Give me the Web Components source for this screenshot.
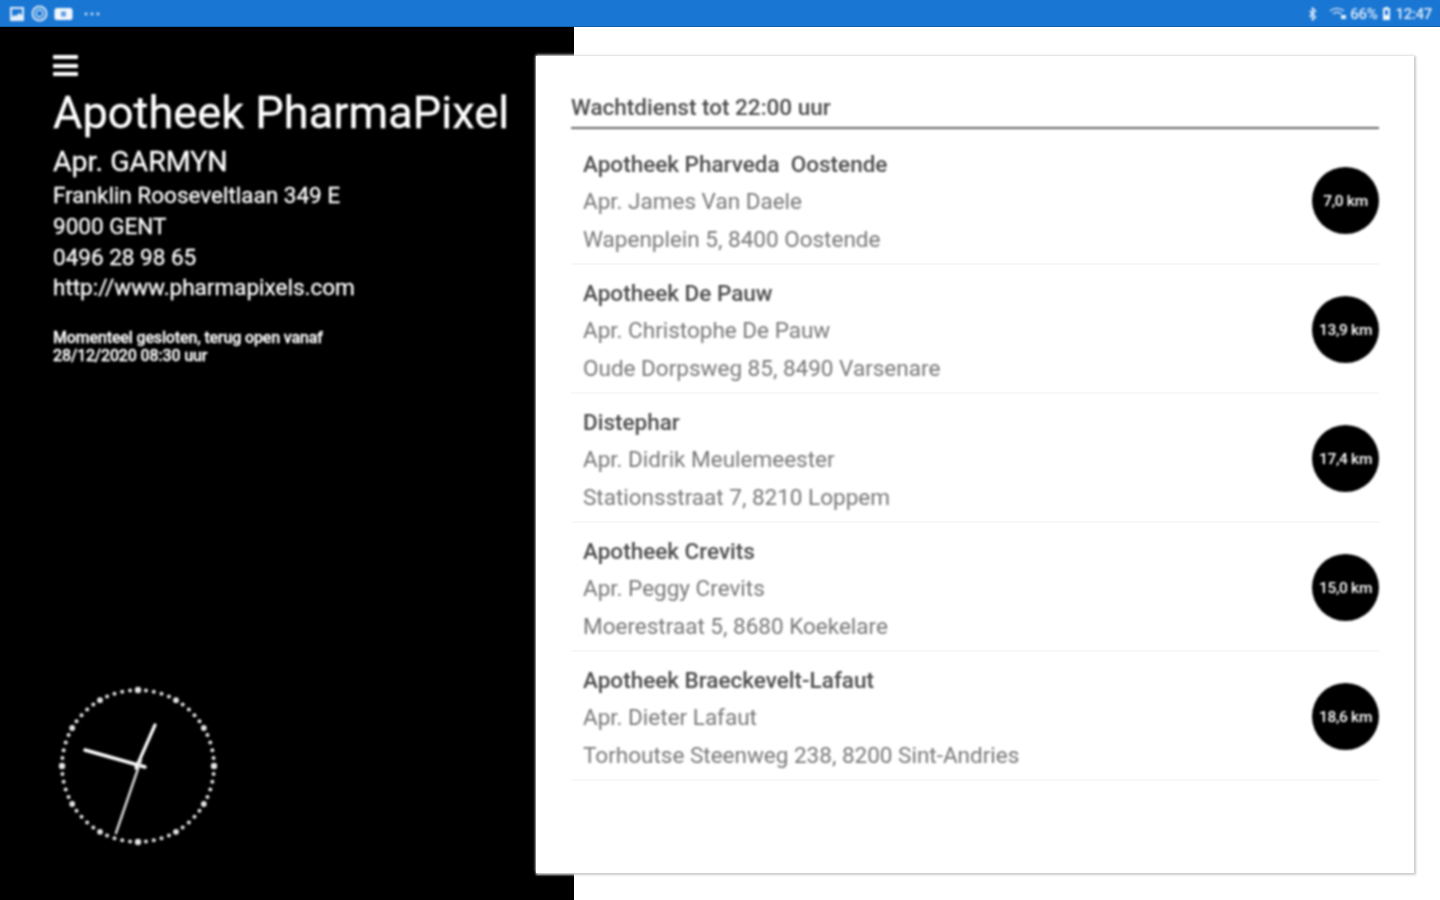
<!DOCTYPE html>
<html lang="en">
<head>
<meta charset="UTF-8">
<title>Apotheek PharmaPixel</title>
<style>
  html, body { margin: 0; height: 100%; background: #fff; font-family: Roboto, "Liberation Sans", sans-serif; }
  body { display: flex; flex-direction: column; height: 900px; overflow: hidden; }
  .screen { display: flex; flex: 1; min-height: 0; }
</style>
</head>
<body>
<status-bar></status-bar>
<div class="screen">
  <side-panel>
    <analog-clock slot="clock"></analog-clock>
  </side-panel>
  <duty-card title="Wachtdienst tot 22:00 uur">
    <pharmacy-row name="Apotheek Pharveda&nbsp; Oostende" pharmacist="Apr. James Van Daele" address="Wapenplein 5, 8400 Oostende" distance="7,0 km"></pharmacy-row>
    <pharmacy-row name="Apotheek De Pauw" pharmacist="Apr. Christophe De Pauw" address="Oude Dorpsweg 85, 8490 Varsenare" distance="13,9 km"></pharmacy-row>
    <pharmacy-row name="Distephar" pharmacist="Apr. Didrik Meulemeester" address="Stationsstraat 7, 8210 Loppem" distance="17,4 km"></pharmacy-row>
    <pharmacy-row name="Apotheek Crevits" pharmacist="Apr. Peggy Crevits" address="Moerestraat 5, 8680 Koekelare" distance="15,0 km"></pharmacy-row>
    <pharmacy-row name="Apotheek Braeckevelt-Lafaut" pharmacist="Apr. Dieter Lafaut" address="Torhoutse Steenweg 238, 8200 Sint-Andries" distance="18,6 km"></pharmacy-row>
  </duty-card>
</div>

<script>
  class StatusBar extends HTMLElement {
    constructor() {
      super();
      this.attachShadow({ mode: 'open' }).innerHTML = `
        <style>
          :host {
            display: flex; align-items: center; justify-content: space-between;
            flex: none; height: 27px; box-sizing: border-box;
            padding: 0 8px 0 9px; background: #1976d3; color: #e3eefa;
            box-shadow: inset 0 -1px 0 #1560b0;
          }
          .group { display: flex; align-items: center; filter: blur(.8px); }
          svg { display: block; }
          .left { gap: 6px; }
          .right { font-size: 15px; font-weight: 500; letter-spacing: -.3px; }
        </style>
        <div class="group left">
          <svg width="16" height="16" viewBox="0 0 16 16"><path fill="#e3eefa" d="M1 1h14v14H1z"/><path fill="#1976d3" d="M3 3h10v6l-3-2-3 3-2-1-2 2z"/></svg>
          <svg width="17" height="17" viewBox="0 0 17 17"><circle cx="8.5" cy="8.5" r="7" fill="none" stroke="#d5e6f8" stroke-width="2"/><circle cx="8.5" cy="8.5" r="3.5" fill="none" stroke="#d5e6f8" stroke-width="1.5"/></svg>
          <svg width="19" height="14" viewBox="0 0 19 14"><rect x=".5" y="1" width="18" height="12" rx="2.5" fill="#f2f7fd"/><rect x="7" y="4.500" width="5" height="5" fill="#5f9fe0"/></svg>
          <svg width="20" height="6" viewBox="0 0 20 6" style="margin-left:4px"><g fill="#d5e6f8"><circle cx="3" cy="3" r="1.4"/><circle cx="9" cy="3" r="1.4"/><circle cx="15" cy="3" r="1.4"/></g></svg>
        </div>
        <div class="group right">
          <svg width="10" height="14" viewBox="0 0 10 14" style="margin-right:11px"><path fill="none" stroke="#e3eefa" stroke-width="1.4" d="M1.500 4l6 6-3 3V1l3 3-6 6"/></svg>
          <svg width="18" height="13" viewBox="0 0 18 13" style="margin-right:3px"><path fill="none" stroke="#c5dcf5" stroke-width="1.5" d="M1 4c4-3.500 10-3.500 14 0M4 7c2.500-2 6-2 8.500 0"/><path fill="#e3eefa" d="M12 8h5v4h-5z"/></svg>
          <span>66%</span>
          <svg width="9" height="13" viewBox="0 0 9 13" style="margin:0 4px 0 5px"><path fill="#f2f7fd" d="M3 0h3v1h2v12H1V1h2z"/><path fill="#1976d3" d="M3 3h3v5H3z"/></svg>
          <span>12:47</span>
        </div>`;
    }
  }

  class SidePanel extends HTMLElement {
    constructor() {
      super();
      this.attachShadow({ mode: 'open' }).innerHTML = `
        <style>
          :host {
            display: flex; flex-direction: column; flex: none; box-sizing: border-box;
            width: 574px; padding: 28px 0 0 53px; background: #000; color: #fff;
          }
          .info { filter: blur(.9px); -webkit-text-stroke: .3px #fff; }
          .menu { display: flex; flex-direction: column; gap: 4.700px; width: 25px; }
          .menu i { display: block; height: 4px; background: #fff; border-radius: 1px; }
          h1 { margin: 6.600px 0 0; font-size: 45.200px; line-height: 60px; font-weight: 400; white-space: nowrap; }
          .chief { font-size: 28.500px; line-height: 37px; }
          .line { font-size: 22.500px; line-height: 30.800px; }
          .note { margin-top: 25.800px; font-size: 16px; line-height: 18px; font-weight: 500; letter-spacing: -.15px; }
          ::slotted(analog-clock) { margin: auto 0 54px 5px; }
        </style>
        <div class="info">
          <div class="menu"><i></i><i></i><i></i></div>
          <h1>Apotheek PharmaPixel</h1>
          <div class="chief">Apr. GARMYN</div>
          <div class="line">Franklin Rooseveltlaan 349 E</div>
          <div class="line">9000 GENT</div>
          <div class="line">0496 28 98 65</div>
          <div class="line">http://www.pharmapixels.com</div>
          <div class="note">Momenteel gesloten, terug open vanaf<br>28/12/2020 08:30 uur</div>
        </div>
        <slot name="clock"></slot>`;
    }
  }

  class AnalogClock extends HTMLElement {
    constructor() {
      super();
      let dots = '';
      for (let i = 0; i < 60; i++) {
        const a = i * Math.PI / 30;
        const r = i % 15 == 0 ? 3.2 : i % 5 == 0 ? 2.9 : 2;
        dots += `<circle cx="${(80 + 76 * Math.sin(a)).toFixed(2)}" cy="${(80 - 76 * Math.cos(a)).toFixed(2)}" r="${r}"/>`;
      }
      this.attachShadow({ mode: 'open' }).innerHTML = `
        <style>
          :host { display: block; width: 160px; height: 160px; }
          svg { display: block; filter: blur(.9px); }
        </style>
        <svg width="160" height="160" viewBox="0 0 160 160">
          <g fill="#e4e4e4">${dots}</g>
          <g stroke="#fff" stroke-linecap="round">
            <path stroke-width="3.400" d="M27 64 87 81"/>
            <path stroke-width="3.200" d="M97 39 78 82"/>
            <path stroke="#ddd" stroke-width="2.400" d="M83 74 58 147"/>
          </g>
        </svg>`;
    }
  }

  class DutyCard extends HTMLElement {
    constructor() {
      super();
      this.attachShadow({ mode: 'open' }).innerHTML = `
        <style>
          :host {
            display: block; flex: none; box-sizing: border-box; position: relative;
            width: 878px; height: 817px; margin: 29px 0 0 -38px;
            padding: 35px 35px 0 35px; background: #fff;
            box-shadow: 1px 1px 2px 1px #ccc, 0 -1px 3px #eee;
          }
          h2 {
            margin: 0; height: 38px; box-sizing: border-box; padding-top: 1px;
            border-bottom: 2px solid #666; color: #4c4c4c;
            font-size: 22.500px; line-height: 30px; font-weight: 500; filter: blur(.9px);
          }
          .rows { padding-top: 7px; }
        </style>
        <h2>${this.getAttribute('title')}</h2>
        <div class="rows"><slot></slot></div>`;
    }
  }

  class PharmacyRow extends HTMLElement {
    constructor() {
      super();
      this.attachShadow({ mode: 'open' }).innerHTML = `
        <style>
          :host {
            display: flex; align-items: center; justify-content: space-between;
            box-sizing: border-box; height: 129px; padding: 5px 0 0 12px;
            border-bottom: 2px solid #f8f8f8;
          }
          .text { filter: blur(.9px); }
          .text div { font-size: 22.500px; line-height: 37.500px; color: #777; white-space: nowrap; }
          .text .name { color: #4c4c4c; font-weight: 500; }
          .badge {
            display: flex; align-items: center; justify-content: center;
            width: 67px; height: 67px; margin-bottom: 3px; border-radius: 50%; background: #000;
            color: #fff; font-size: 15.500px; font-weight: 500; letter-spacing: -.3px;
            white-space: nowrap; filter: blur(.9px);
          }
        </style>
        <div class="text">
          <div class="name">${this.getAttribute('name')}</div>
          <div>${this.getAttribute('pharmacist')}</div>
          <div>${this.getAttribute('address')}</div>
        </div>
        <div class="badge">${this.getAttribute('distance')}</div>`;
    }
  }

  customElements.define('status-bar', StatusBar);
  customElements.define('side-panel', SidePanel);
  customElements.define('analog-clock', AnalogClock);
  customElements.define('duty-card', DutyCard);
  customElements.define('pharmacy-row', PharmacyRow);
</script>
</body>
</html>
